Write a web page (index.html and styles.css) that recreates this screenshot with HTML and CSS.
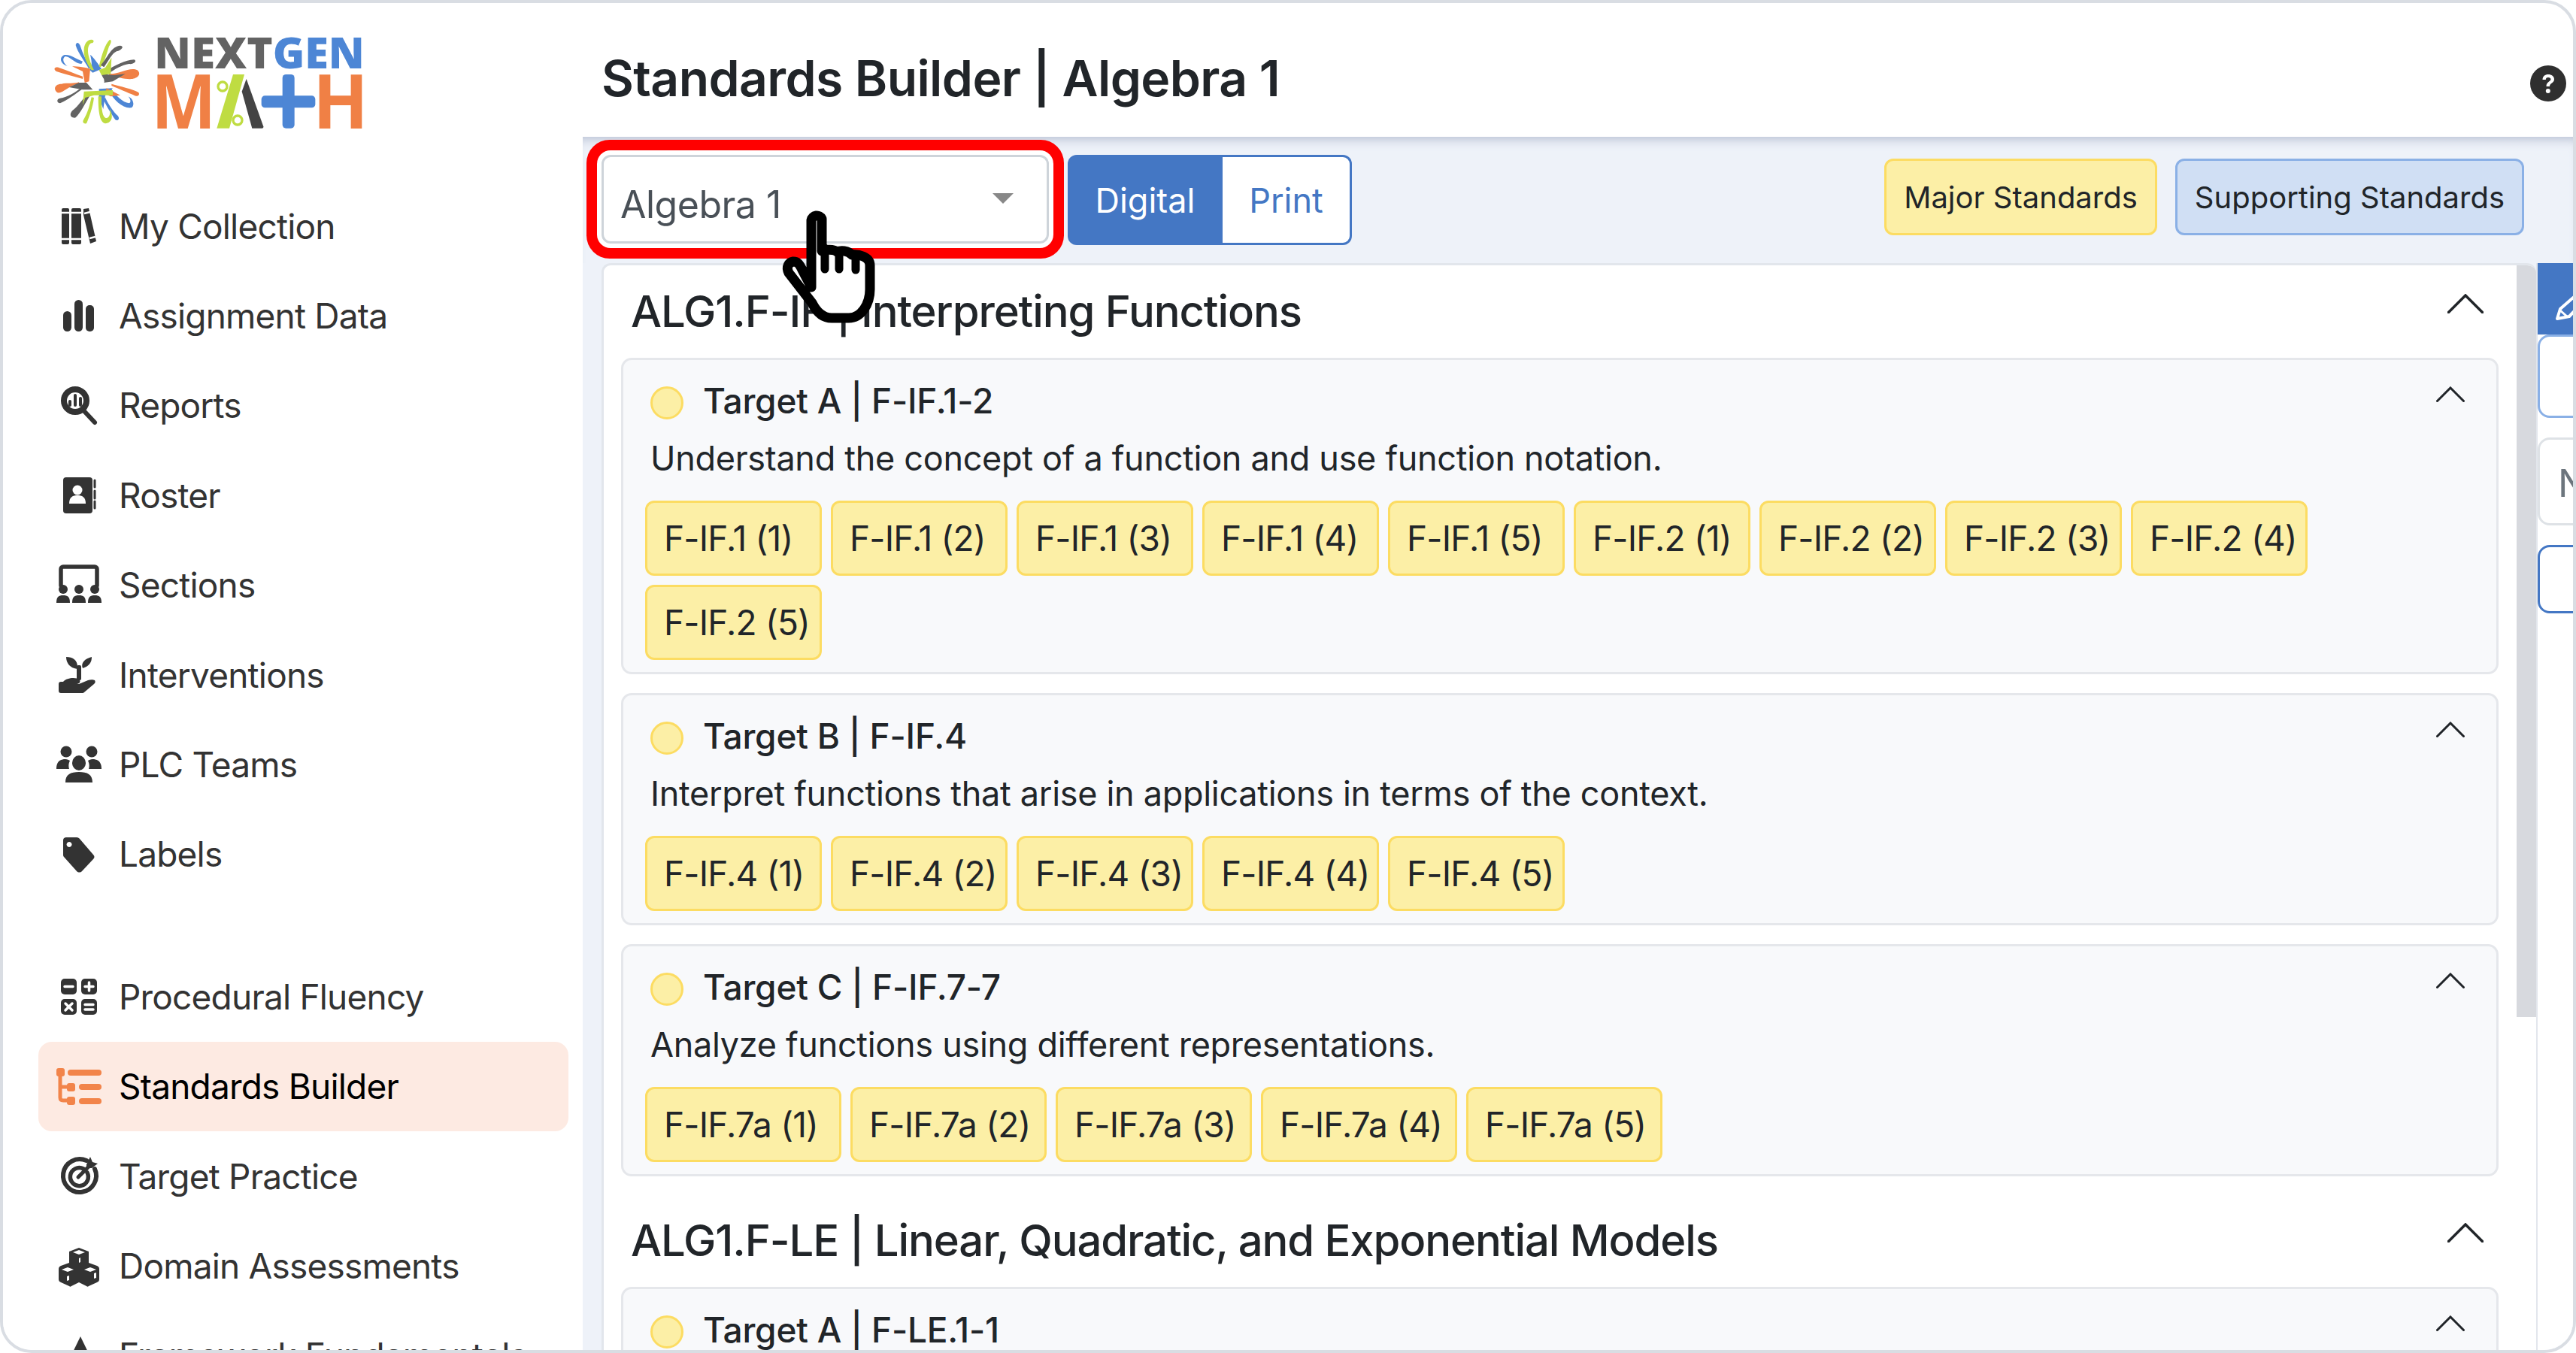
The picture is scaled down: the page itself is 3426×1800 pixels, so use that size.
FILE: index.html
```html
<!DOCTYPE html>
<html lang="en">
<head>
<meta charset="utf-8">
<title>Standards Builder | Algebra 1</title>
<link rel="stylesheet" href="styles.css">
</head>
<body>
<div class="frame">
  <aside class="sidebar">
    <div class="logo">
      <svg class="logo-svg" viewBox="0 0 1350 510" width="450" height="170">
        <g fill="#4d86d5">
          <path d="M145 165C120 165 100 135 80 135C65 145 75 165 90 175C60 165 55 140 75 130C100 125 130 150 150 155Z"/>
          <path d="M175 185C155 150 130 120 122 90C125 75 135 80 140 92C150 125 165 155 185 180Z"/>
          <path d="M262 262C280 290 310 320 335 322C345 320 340 300 330 295C350 300 360 330 345 340C310 345 275 310 252 270Z"/>
          <path d="M240 300C255 330 275 360 290 372C300 385 290 395 280 388C265 365 245 335 232 305Z"/>
          <path d="M180 128C195 140 215 170 225 185L190 200L178 190C190 170 185 150 180 128Z"/>
          <path d="M215 265L270 262L240 290L232 345L215 300Z"/>
        </g>
        <g fill="#bfdc42">
          <path d="M185 190C140 130 150 70 185 68C198 68 195 82 185 82C165 90 165 130 195 190Z"/>
          <path d="M215 175C225 130 240 85 258 68C268 70 262 85 255 95C245 125 240 150 222 178Z"/>
          <path d="M225 295C225 330 225 370 240 380C255 385 262 365 258 345C272 370 270 400 240 403C215 400 212 340 212 295Z"/>
          <path d="M195 300C190 340 175 380 165 403C150 405 148 395 155 385C170 360 178 330 185 298Z"/>
        </g>
        <g fill="#636363">
          <path d="M222 170C250 140 262 95 300 92C318 95 305 110 285 115C265 125 255 150 235 178Z"/>
          <path d="M240 195C280 170 320 150 355 148C370 155 350 168 335 165C305 170 280 185 250 205Z"/>
          <path d="M180 290C160 320 140 365 120 380C100 380 95 365 110 350C125 340 140 320 165 288Z"/>
          <path d="M150 265C120 285 90 310 60 322C45 320 45 305 60 302C90 298 120 280 145 258Z"/>
        </g>
        <g fill="#f08045">
          <path d="M255 205C300 205 340 175 368 190C390 210 360 230 330 225C300 222 280 215 255 212Z"/>
          <path d="M265 245C300 255 350 265 372 278C382 290 365 298 355 290C330 280 295 265 265 252Z"/>
          <path d="M135 245C100 245 70 285 50 280C30 265 40 245 65 245C90 240 115 245 135 238Z"/>
          <path d="M150 225C115 215 75 205 45 195C30 185 40 175 55 180C85 190 120 205 150 215Z"/>
          <path d="M108 175C130 175 165 180 180 185L175 235L158 240L150 195Z"/>
          <path d="M245 262L300 290L262 295L240 285Z"/>
        </g>
        <path fill="#636363" d="M320 205L270 235L235 240L225 205L275 210Z"/>
        <path fill="#636363" d="M95 258L135 240L165 240L190 268L150 268Z"/>
        <path fill="#bfdc42" d="M265 140L262 205L225 210L215 190L240 180Z"/>
        <path fill="#bfdc42" d="M150 330L155 275L270 270L270 290L195 290L160 300Z"/>
        <circle cx="207" cy="235" r="29" fill="#fff"/>
        <text class="logo-next" x="436" y="182" textLength="472" lengthAdjust="spacingAndGlyphs" fill="#636363">NEXT</text>
        <text class="logo-next" x="908" y="182" textLength="366" lengthAdjust="spacingAndGlyphs" fill="#4d86d5">GEN</text>
        <text class="logo-math" x="424" y="422" textLength="258" lengthAdjust="spacingAndGlyphs" fill="#f08045">M</text>
        <text class="logo-math" x="1068" y="422" textLength="222" lengthAdjust="spacingAndGlyphs" fill="#f08045">H</text>
        <path fill="#bfdc42" d="M750 207H795L735 422H685Z"/>
        <circle cx="708" cy="255" r="18" fill="none" stroke="#bfdc42" stroke-width="10"/>
        <circle cx="768" cy="390" r="18" fill="none" stroke="#bfdc42" stroke-width="10"/>
        <path fill="#444" d="M803 225L871 415Q872 422 865 422H826L785 275Z"/>
        <rect x="863" y="292" width="215" height="48" rx="14" fill="#4d86d5"/>
        <rect x="947" y="207" width="48" height="215" rx="14" fill="#4d86d5"/>
      </svg>
    </div>
    <nav class="nav">
      <a class="nav-item"><svg class="nav-icon" viewBox="0 0 60 60"><rect x="7" y="6" width="10" height="48" rx="2"/><rect x="20" y="6" width="13" height="48" rx="2"/><path d="M36 7l7-1 10 44-8 3-9-38z"/><path d="M7 12h26M7 47h26M37 13l8-2M44 46l8-2" stroke="#fff" stroke-width="2.5"/></svg><span>My Collection</span></a>
      <a class="nav-item"><svg class="nav-icon" viewBox="0 0 60 60"><rect x="9" y="24" width="11" height="27" rx="5.5"/><rect x="24" y="9" width="11" height="42" rx="5.5"/><rect x="39" y="16" width="11" height="35" rx="5"/></svg><span>Assignment Data</span></a>
      <a class="nav-item"><svg class="nav-icon" viewBox="0 0 60 60"><circle cx="25" cy="24" r="15" fill="none" stroke="currentColor" stroke-width="8"/><path d="M37 38l14 15" stroke="currentColor" stroke-width="6" stroke-linecap="round"/><rect x="16" y="23" width="4" height="9" rx="2"/><rect x="23" y="15" width="4" height="17" rx="2"/><rect x="30" y="19" width="4" height="13" rx="2"/></svg><span>Reports</span></a>
      <a class="nav-item"><svg class="nav-icon" viewBox="0 0 60 60"><rect x="9" y="6" width="39" height="48" rx="4"/><circle cx="28" cy="23" r="6.5" fill="#fff"/><path d="M17 41c0-9 5-11 11-11s11 2 11 11z" fill="#fff"/><path d="M51 10v9M51 24v10M51 38v9" stroke="currentColor" stroke-width="3" stroke-linecap="round"/></svg><span>Roster</span></a>
      <a class="nav-item"><svg class="nav-icon" viewBox="0 0 60 60"><path d="M6 31V9a3 3 0 0 1 3-3h42a3 3 0 0 1 3 3v22" fill="none" stroke="currentColor" stroke-width="5.5" stroke-linecap="round"/><circle cx="9" cy="36" r="6"/><circle cx="30" cy="36" r="6"/><circle cx="51" cy="36" r="6"/><path d="M0 54c0-8 3-10 9-10s9 2 9 10zM21 54c0-8 3-10 9-10s9 2 9 10zM42 54c0-8 3-10 9-10s9 2 9 10z"/></svg><span>Sections</span></a>
      <a class="nav-item"><svg class="nav-icon" viewBox="0 0 60 60"><path d="M13 6c9 0 15 4 15 13v3C18 21 13 14 13 6zM47 6c0 7-3 12-12 15-3-7 3-13 12-15z"/><rect x="27" y="17" width="6" height="20" rx="2"/><path d="M3 42c0-2 1-3 3-3h3c5-6 18-6 21-3 3 2 1 6-3 6h-6 9l12-5c3-1 7-1 9 0 1 2 1 3-1 5l-13 11c-1 1-2 1-3 1H6c-2 0-3-1-3-3z"/></svg><span>Interventions</span></a>
      <a class="nav-item"><svg class="nav-icon" viewBox="0 0 60 60"><circle cx="13" cy="13" r="7.5"/><circle cx="47" cy="13" r="7.5"/><ellipse cx="30" cy="28" rx="9" ry="10"/><path d="M0 36c0-10 5-13 12-13 3 0 4 1 6 2-2 4-2 8-1 11zM60 36c0-10-5-13-12-13-3 0-4 1-6 2 2 4 2 8 1 11zM12 54c0-11 7-14 18-14s18 3 18 14z"/></svg><span>PLC Teams</span></a>
      <a class="nav-item"><svg class="nav-icon" viewBox="0 0 60 60"><path fill-rule="evenodd" d="M9 12c0-3 2-4 4-4h14c2 0 3 1 4 2l18 21c2 2 2 4 0 6L34 53c-2 2-5 2-7 0L10 34c-1-1-1-2-1-4zM17 14a3.500 3.500 0 1 0 .1 0z"/></svg><span>Labels</span></a>
    </nav>
    <nav class="nav nav-second">
      <a class="nav-item"><svg class="nav-icon" viewBox="0 0 60 60"><rect x="6" y="6" width="21" height="21" rx="5"/><rect x="33" y="6" width="21" height="21" rx="5"/><rect x="6" y="33" width="21" height="21" rx="5"/><rect x="33" y="33" width="21" height="21" rx="5"/><path d="M11 16.500h11M38 16.500h11M43.500 11v11M12 39l9 9M21 39l-9 9M38 40.500h11M38 47h11" stroke="#fff" stroke-width="3.500" stroke-linecap="round"/></svg><span>Procedural Fluency</span></a>
      <a class="nav-item active"><svg class="nav-icon" viewBox="0 0 60 60"><rect x="0" y="6" width="11" height="11" rx="3"/><rect x="15" y="8" width="45" height="8" rx="4"/><rect x="14" y="26" width="11" height="11" rx="3"/><rect x="30" y="27" width="30" height="8" rx="4"/><rect x="14" y="44" width="11" height="11" rx="3"/><rect x="30" y="46" width="30" height="8" rx="4"/><path d="M5 14v31c0 3 1 4 4 4h8M5 31h12" fill="none" stroke="currentColor" stroke-width="5"/></svg><span>Standards Builder</span></a>
      <a class="nav-item"><svg class="nav-icon" viewBox="0 0 60 60"><path d="M40 9A22 22 0 1 0 51 20" fill="none" stroke="currentColor" stroke-width="6" stroke-linecap="round"/><path d="M36 20A12 12 0 1 0 41 25" fill="none" stroke="currentColor" stroke-width="5.500" stroke-linecap="round"/><path d="M29 31L45 15" stroke="currentColor" stroke-width="5" stroke-linecap="round"/><path d="M40 14l5-10 3 7 7 2-8 6-7 0z"/></svg><span>Target Practice</span></a>
      <a class="nav-item"><svg class="nav-icon" viewBox="0 0 60 60"><path d="M30 6l13 5v15l11 4c2 1 3 2 3 4v14c0 2-1 3-3 4l-11 5c-1 1-2 1-3 0l-10-5-10 5c-1 1-2 1-3 0L6 52c-2-1-3-2-3-4V34c0-2 1-3 3-4l11-4V11z"/><path d="M30 9l8 3-8 3-8-3zM15 32l8 3-8 3-8-3zM45 32l8 3-8 3-8-3zM32 19l-2 1v6l2-1zM17 43l-3 1v6l3-1zM50 40l3-1v7l-3 1z" fill="#fff"/></svg><span>Domain Assessments</span></a>
      <a class="nav-item"><svg class="nav-icon" viewBox="0 0 60 60"><path d="M32 5L50 42H14z"/></svg><span>Framework Fundamentals</span></a>
    </nav>
  </aside>
  <main class="main">
    <header class="page-head">
      <h1 class="page-title">Standards Builder | Algebra 1</h1>
      <svg class="help" viewBox="0 0 48 48"><circle cx="24" cy="24" r="24" fill="#2f2f2f"/><path d="M16.500 19c0-4.500 3.500-7 7.500-7 4.500 0 8 2.500 8 6.500 0 5-6 5-6 9.500h-4.500c0-6.500 6-6.500 6-9.500 0-1.500-1.500-2.500-3.500-2.500s-3.200 1-3.200 3z" fill="#fff"/><circle cx="23.800" cy="34" r="3" fill="#fff"/></svg>
    </header>
    <div class="toolbar">
      <div class="select"><span>Algebra 1</span><i class="caret"></i></div>
      <div class="toggle"><span class="toggle-btn on">Digital</span><span class="toggle-btn">Print</span></div>
      <div class="legend">
        <span class="legend-btn major">Major Standards</span>
        <span class="legend-btn supporting">Supporting Standards</span>
      </div>
    </div>
    <div class="workspace">
      <div class="card">
        <div class="card-scroll">
          <section class="section">
            <div class="section-head"><h2>ALG1.F-IF | Interpreting Functions</h2><svg class="chev-lg" viewBox="0 0 48 26"><path d="M1.500 24.500L24 2l22.500 22.500"/></svg></div>
            <div class="groups">
              <article class="group">
                <div class="group-head"><i class="dot"></i><h3>Target A | F-IF.1-2</h3><svg class="chev-sm" viewBox="0 0 38 21"><path d="M1.500 19.500L19 2l17.500 17.500"/></svg></div>
                <p class="desc">Understand the concept of a function and use function notation.</p>
                <div class="chips"><span class="chip">F-IF.1 (1)</span><span class="chip">F-IF.1 (2)</span><span class="chip">F-IF.1 (3)</span><span class="chip">F-IF.1 (4)</span><span class="chip">F-IF.1 (5)</span><span class="chip">F-IF.2 (1)</span><span class="chip">F-IF.2 (2)</span><span class="chip">F-IF.2 (3)</span><span class="chip">F-IF.2 (4)</span><span class="chip">F-IF.2 (5)</span></div>
              </article>
              <article class="group">
                <div class="group-head"><i class="dot"></i><h3>Target B | F-IF.4</h3><svg class="chev-sm" viewBox="0 0 38 21"><path d="M1.500 19.500L19 2l17.500 17.500"/></svg></div>
                <p class="desc">Interpret functions that arise in applications in terms of the context.</p>
                <div class="chips"><span class="chip">F-IF.4 (1)</span><span class="chip">F-IF.4 (2)</span><span class="chip">F-IF.4 (3)</span><span class="chip">F-IF.4 (4)</span><span class="chip">F-IF.4 (5)</span></div>
              </article>
              <article class="group">
                <div class="group-head"><i class="dot"></i><h3>Target C | F-IF.7-7</h3><svg class="chev-sm" viewBox="0 0 38 21"><path d="M1.500 19.500L19 2l17.500 17.500"/></svg></div>
                <p class="desc">Analyze functions using different representations.</p>
                <div class="chips chips-wide"><span class="chip">F-IF.7a (1)</span><span class="chip">F-IF.7a (2)</span><span class="chip">F-IF.7a (3)</span><span class="chip">F-IF.7a (4)</span><span class="chip">F-IF.7a (5)</span></div>
              </article>
            </div>
          </section>
          <section class="section section-next">
            <div class="section-head"><h2>ALG1.F-LE | Linear, Quadratic, and Exponential Models</h2><svg class="chev-lg" viewBox="0 0 48 26"><path d="M1.500 24.500L24 2l22.500 22.500"/></svg></div>
            <div class="groups">
              <article class="group">
                <div class="group-head"><i class="dot"></i><h3>Target A | F-LE.1-1</h3><svg class="chev-sm" viewBox="0 0 38 21"><path d="M1.500 19.500L19 2l17.500 17.500"/></svg></div>
              </article>
            </div>
          </section>
        </div>
        <div class="scrollbar"><div class="thumb"></div></div>
      </div>
      <div class="side-panel">
        <div class="panel-tab"><svg class="pencil" viewBox="0 0 40 40"><path d="M3 36l4-13L30 3l9 9-20 21z" fill="none" stroke="#fff" stroke-width="4" stroke-linejoin="round"/><path d="M7 25l9 8" stroke="#fff" stroke-width="3"/></svg></div>
        <div class="panel-box blue-soft"></div>
        <div class="panel-box grey">N</div>
        <div class="panel-box blue-strong"></div>
      </div>
    </div>
  </main>
  <svg class="hand" viewBox="0 0 124 152" width="124" height="152"><path d="M39 104V15a7.500 7.500 0 0 1 14-2V56c3-2 16-3 20 1 5-2 15-2 20 4 8-1 24 2 24 14v32c0 20-12 38-28 38H66c-12 0-20-8-26-20L9 85c-4-8 0-14 6-15 6 0 8 3 12 11l12 23z" fill="#fff" stroke="#000" stroke-width="13" stroke-linejoin="round"/><path d="M57 52v28M76 56v24M98 64v17" stroke="#000" stroke-width="11" stroke-linecap="round"/></svg>
</div>
</body>
</html>
```
FILE: styles.css
```css
* { box-sizing: border-box; }
html, body { margin: 0; padding: 0; background: #fff; }
body { font-family: Inter, "Liberation Sans", sans-serif; color: #212529; width: 3426px; height: 1800px; overflow: hidden; }
h1, h2, h3, p { margin: 0; }

.frame { position: relative; display: flex; width: 3426px; height: 1800px; border: 4px solid #d9dde3; border-radius: 42px; overflow: hidden; background: #fff; }

.sidebar { flex: 0 0 771px; height: 100%; background: #fff; overflow: hidden; }
.logo { height: 237px; padding: 26px 0 0 56px; }
.logo-svg { display: block; }
.logo-next { font-family: "Open Sans", sans-serif; font-weight: 800; font-size: 168px; }
.logo-math { font-family: "Open Sans", sans-serif; font-weight: 700; font-size: 301px; }

.nav { margin-left: 47px; width: 705px; }
.nav-second { margin-top: 70px; }
.nav-item { display: flex; align-items: center; height: 119.4px; padding-left: 24px; gap: 23px; font-size: 46px; letter-spacing: -0.8px; color: #333; border-radius: 18px; }
.nav-icon { flex: 0 0 60px; width: 60px; height: 60px; fill: currentColor; }
.nav-item.active { background: #fdeae2; color: #000; }
.nav-item.active .nav-icon { color: #f2844a; }

.main { flex: 1; min-width: 0; display: flex; flex-direction: column; }
.page-head { flex: 0 0 178px; display: flex; align-items: center; justify-content: space-between; padding: 22px 9px 0 25px; }
.page-title { font-size: 66px; font-weight: 600; letter-spacing: -0.6px; color: #212529; }
.help { width: 48px; height: 48px; margin-top: 14px; }

.toolbar { flex: 0 0 168px; display: flex; align-items: flex-start; padding: 24px 65px 0 25px; background: #eef2f9; box-shadow: inset 0 14px 16px -12px #aeb7cc; }
.select { display: flex; align-items: center; justify-content: space-between; width: 595px; height: 118px; padding: 14px 44px 0 22px; background: #fff; border: 3px solid #ced4da; border-radius: 12px; box-shadow: 0 0 0 6px #fff, 0 0 0 20px #f00; font-size: 50px; letter-spacing: -0.5px; color: #495057; }
.caret { width: 0; height: 0; margin-top: -16px; border-left: 14px solid transparent; border-right: 14px solid transparent; border-top: 14px solid #888; }
.toggle { display: flex; margin-left: 25px; }
.toggle-btn { display: flex; align-items: center; justify-content: center; height: 120px; width: 172px; font-size: 45px; color: #4477c4; background: #fff; border: 3px solid #4477c4; border-left: 0; border-radius: 0 12px 12px 0; }
.toggle-btn.on { width: 206px; background: #4477c4; color: #fff; border: 0; border-radius: 12px 0 0 12px; }
.legend { display: flex; gap: 24px; margin-left: auto; padding-top: 5px; }
.legend-btn { display: flex; align-items: center; height: 102px; padding: 0 23px; font-size: 40px; border-radius: 12px; color: #212529; border: 3px solid; }
.major { background: #fcefa6; border-color: #fcdc62; }
.supporting { background: #d0dff4; border-color: #8ab0e6; }

.workspace { flex: 1; min-height: 0; display: flex; padding-left: 25px; background: #eef2f9; }
.card { flex: 1; min-width: 0; display: flex; background: #fff; border: 3px solid #e2e6ec; border-width: 3px 0 0 3px; border-radius: 12px 12px 0 0; overflow: hidden; }
.card-scroll { flex: 1; min-width: 0; padding: 0 24px 0 23px; }
.section-next { margin-top: 24px; }
.section-head { display: flex; justify-content: space-between; height: 123px; padding: 36px 20px 0 13px; }
.section-head h2 { font-size: 58px; font-weight: 500; line-height: 50px; letter-spacing: -1.1px; }
.chev-lg { width: 48px; height: 26px; margin-top: 2px; fill: none; stroke: #212529; stroke-width: 3.500; stroke-linecap: round; }
.chev-sm { width: 38px; height: 21px; margin: 6px 42px 0 auto; fill: none; stroke: #212529; stroke-width: 3; stroke-linecap: round; }
.groups { display: flex; flex-direction: column; gap: 25px; }
.group { padding: 29px 0 16px 36px; background: #f8f9fb; border: 3px solid #e5e7eb; border-radius: 14px; }
.group-head { display: flex; align-items: flex-start; height: 50px; }
.group-head h3 { margin-left: 26px; font-size: 46px; font-weight: 500; line-height: 50px; letter-spacing: -0.2px; }
.dot { flex: 0 0 44px; height: 44px; margin-top: 6px; background: #fcefa6; border: 3px solid #fcdc62; border-radius: 50%; }
.desc { margin-top: 26px; font-size: 45px; line-height: 52px; letter-spacing: -0.3px; }
.chips { display: flex; flex-wrap: wrap; gap: 12px; margin: 30px 0 0 -7px; padding-right: 200px; }
.chip { display: flex; align-items: center; width: 235px; height: 100px; padding-left: 22px; font-size: 46px; letter-spacing: -0.8px; background: #fcefa6; border: 3px solid #fcdc62; border-radius: 12px; }
.chips-wide .chip { width: 261px; }

.scrollbar { flex: 0 0 26px; }
.thumb { height: 1000px; background: #d7d9de; }

.side-panel { flex: 0 0 49px; background: #fff; border-left: 2px solid #e2e6ec; overflow: hidden; }
.panel-tab { height: 95px; margin-left: -2px; padding: 38px 0 0 25px; background: #4477c4; }
.pencil { display: block; width: 40px; height: 40px; }
.panel-box { width: 80px; background: #fff; border: 3px solid; border-radius: 16px; }
.blue-soft { height: 111px; border-color: #8ab0e6; }
.grey { height: 117px; margin-top: 26px; padding: 28px 0 0 24px; font-size: 50px; color: #6c757d; border-color: #dee2e6; }
.blue-strong { height: 91px; margin-top: 26px; border-color: #4477c4; }

.hand { position: absolute; left: 1036px; top: 274px; overflow: visible; }
```
